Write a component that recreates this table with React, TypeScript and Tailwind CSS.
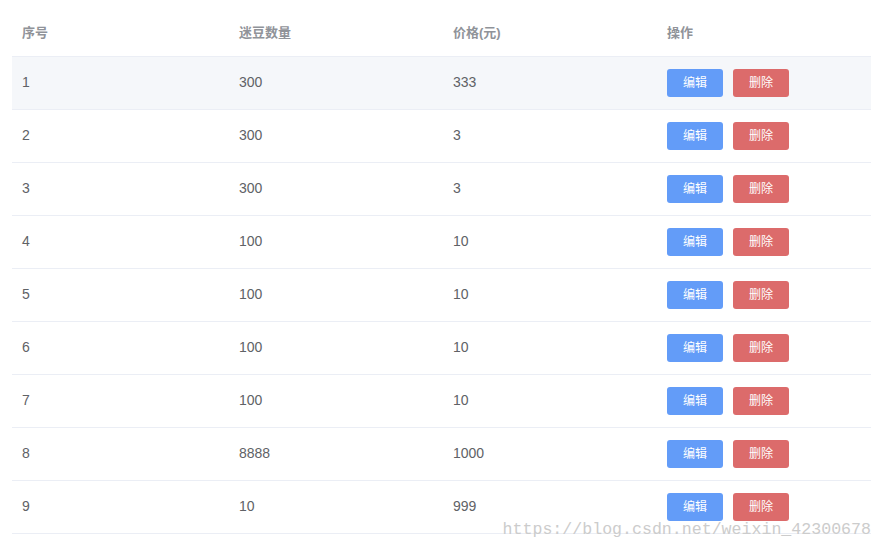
const rows = [
  { id: 1, beans: '300', price: '333' },
  { id: 2, beans: '300', price: '3' },
  { id: 3, beans: '300', price: '3' },
  { id: 4, beans: '100', price: '10' },
  { id: 5, beans: '100', price: '10' },
  { id: 6, beans: '100', price: '10' },
  { id: 7, beans: '100', price: '10' },
  { id: 8, beans: '8888', price: '1000' },
  { id: 9, beans: '10', price: '999' },
]

const font = { fontFamily: '"Helvetica Neue", "Liberation Sans", "Noto Sans CJK SC", sans-serif' }

const App = () => {
  return (
    <div className="relative h-[552px] w-[884px] overflow-hidden bg-white pt-[10px]" style={font}>
      <div className="ml-[12px] w-[859px]">
        <div className="grid h-[47px] grid-cols-[217px_214px_214px_1fr] items-center border-b border-[#ebeef5] pb-[1px] text-[13px] font-semibold text-[#909399]">
          <div className="pl-[10px]">序号</div>
          <div className="pl-[10px]">迷豆数量</div>
          <div className="pl-[10px]">价格(元)</div>
          <div className="pl-[10px]">操作</div>
        </div>
        {rows.map((r) => (
          <div
            key={r.id}
            className={`grid h-[53px] grid-cols-[217px_214px_214px_1fr] items-center border-b border-[#ebeef5] text-[14px] text-[#606266] ${
              r.id === 1 ? 'bg-[#f5f7fa]' : ''
            }`}
          >
            <div className="pb-[2px] pl-[10px]">{r.id}</div>
            <div className="pb-[2px] pl-[10px]">{r.beans}</div>
            <div className="pb-[2px] pl-[10px]">{r.price}</div>
            <div className="flex gap-[10px] pl-[10px]">
              <button className="h-[28px] w-[56px] rounded-[3px] bg-[#639cf8] text-[12px] text-white">编辑</button>
              <button className="h-[28px] w-[56px] rounded-[3px] bg-[#dc6b6b] text-[12px] text-white">删除</button>
            </div>
          </div>
        ))}
      </div>
      <div
        className="absolute right-[13px] top-[520px] text-[16.6px] leading-[20px] text-[#cccccc]"
        style={{ fontFamily: '"Liberation Mono", monospace' }}
      >
        https://blog.csdn.net/weixin_42300678
      </div>
    </div>
  )
}

export default App
